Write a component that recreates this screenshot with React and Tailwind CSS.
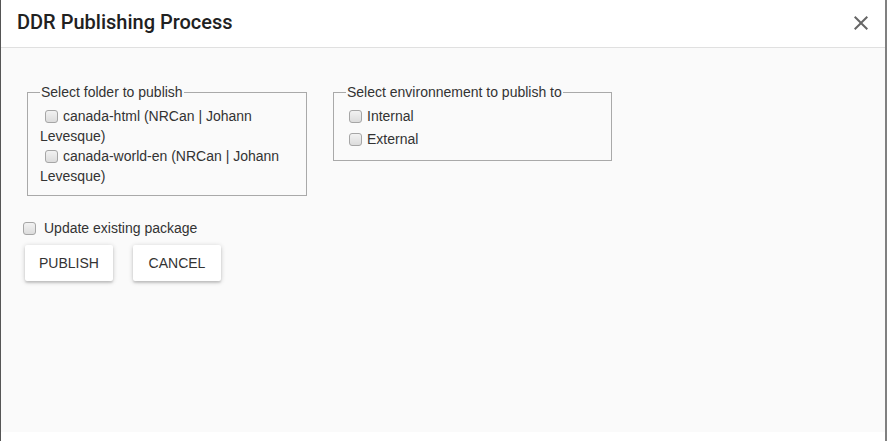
import React from "react";

function Box({ className = "" }) {
  return (
    <span
      className={`inline-block w-[13px] h-[13px] rounded-[3px] border border-[#a6a6a6] bg-gradient-to-b from-[#f2f2f2] to-[#dcdcdc] align-[-2px] ${className}`}
    />
  );
}

export default function App() {
  const arial = { fontFamily: '"Liberation Sans", Arial, sans-serif' };

  return (
    <div className="w-[887px] h-[441px] bg-[#808080] flex overflow-hidden">
      <div className="w-[1px] h-full bg-[#555]" />
      <div className="w-[884px] h-full bg-white flex flex-col">
        {/* header */}
        <div className="h-[48px] shrink-0 border-b border-[#e0e0e0] flex items-center justify-between pl-[16px] pr-[12px] pb-[3px]">
          <h2
            className="text-[20px] font-medium text-[#212121] leading-[28px]"
            style={{ fontFamily: "Roboto, sans-serif" }}
          >
            DDR Publishing Process
          </h2>
          <button className="text-[#666] mt-[2px]">
            <svg width="24" height="24" viewBox="0 0 24 24" fill="currentColor">
              <path d="M19 6.41L17.59 5 12 10.59 6.41 5 5 6.41 10.59 12 5 17.59 6.41 19 12 13.41 17.59 19 19 17.59 13.41 12z" />
            </svg>
          </button>
        </div>

        {/* body */}
        <div className="h-[384px] shrink-0 bg-[#fafafa] pt-[36px] pl-[20px] text-[14px] text-[#333]" style={arial}>
          <div className="flex items-start gap-[26px] ml-[6px]">
            <fieldset className="w-[280px] border border-[#a9a9a9] pl-[12px] pr-[10px] pt-[6px] pb-[9px] leading-[20px]">
              <legend className="px-[1px] leading-[16px]">Select folder to publish</legend>
              <div>
                <Box className="ml-[5px] mr-[5px]" />
                canada-html (NRCan | Johann Levesque)
              </div>
              <div>
                <Box className="ml-[5px] mr-[5px]" />
                canada-world-en (NRCan | Johann Levesque)
              </div>
            </fieldset>

            <fieldset className="w-[279px] border border-[#a9a9a9] pl-[12px] pr-[10px] pt-[5px] pb-[9px]">
              <legend className="px-[1px] leading-[16px]">Select environnement to publish to</legend>
              <label className="flex items-center h-[23px]">
                <Box className="ml-[3px] mr-[5px]" />
                Internal
              </label>
              <label className="flex items-center h-[23px]">
                <Box className="ml-[3px] mr-[5px]" />
                External
              </label>
            </fieldset>
          </div>

          <label className="flex items-center h-[20px] mt-[22px]">
            <Box className="ml-[2px] mr-[8px]" />
            Update existing package
          </label>

          <div className="flex gap-[20px] ml-[4px] mt-[7px]">
            <button className="min-w-[88px] h-[36px] px-[14px] bg-white rounded-[2px] shadow-[0_1px_5px_rgba(0,0,0,0.2),0_2px_2px_rgba(0,0,0,0.12)] uppercase">
              Publish
            </button>
            <button className="min-w-[88px] h-[36px] px-[14px] bg-white rounded-[2px] shadow-[0_1px_5px_rgba(0,0,0,0.2),0_2px_2px_rgba(0,0,0,0.12)] uppercase">
              Cancel
            </button>
          </div>
        </div>
      </div>
    </div>
  );
}
